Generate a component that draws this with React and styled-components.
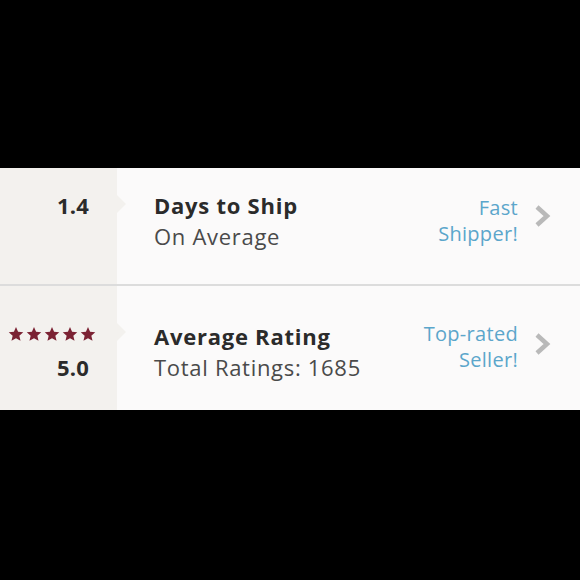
import React from "react";
import styled, { createGlobalStyle } from "styled-components";

const Global = createGlobalStyle`
  html, body { margin: 0; padding: 0; background: #000; }
  body { font-family: "Open Sans", Lato, sans-serif; }
`;

const Page = styled.div`
  width: 580px;
  height: 580px;
  background: #000;
  padding-top: 168px;
  box-sizing: border-box;
`;

const Panel = styled.div`
  background: #fbfafa;
  display: flex;
  flex-direction: column;
`;

const Row = styled.div`
  display: grid;
  grid-template-columns: 117px 1fr;
  height: ${(p) => p.$h}px;
  border-bottom: ${(p) => (p.$divider ? "2px solid #dcdcdc" : "none")};
`;

const Left = styled.div`
  position: relative;
  background: #f3f1ee;
  display: flex;
  flex-direction: column;
  align-items: flex-end;
  padding: ${(p) => p.$pt}px 28px 0 0;
  &::after {
    content: "";
    position: absolute;
    right: -9px;
    top: ${(p) => p.$notch}px;
    border-top: 9px solid transparent;
    border-bottom: 9px solid transparent;
    border-left: 9px solid #f3f1ee;
  }
`;

const Value = styled.div`
  font-size: 22px;
  font-weight: 700;
  color: #2b2b2b;
  line-height: 31px;
  letter-spacing: 0.2px;
`;

const Stars = styled.div`
  display: flex;
  gap: 2px;
  height: 26px;
  margin-bottom: 5px;
  align-items: center;
  margin-right: -7px;
`;

const Main = styled.div`
  display: flex;
  align-items: flex-start;
  padding: ${(p) => p.$pt}px 28px 0 37px;
`;

const Info = styled.div`
  flex: 1;
  display: flex;
  flex-direction: column;
`;

const Title = styled.div`
  font-size: 22px;
  font-weight: 700;
  color: #2b2b2b;
  line-height: 31px;
  letter-spacing: 0.75px;
`;

const Sub = styled.div`
  font-size: 22px;
  font-weight: 400;
  color: #4a4a4a;
  line-height: 31px;
  letter-spacing: 0.7px;
`;

const Tag = styled.div`
  font-size: 20px;
  color: #5ba6cb;
  text-align: right;
  line-height: 26px;
  letter-spacing: 0.3px;
  margin-top: ${(p) => p.$mt}px;
`;

const Chevron = styled.svg`
  width: 18px;
  height: 22px;
  margin-left: 16px;
  margin-top: ${(p) => p.$mt}px;
`;

const Star = () => (
  <svg width="16" height="16" viewBox="0 0 24 24">
    <path
      d="M12 1.5l3.1 7.2 7.8.7-5.9 5.2 1.8 7.7L12 18.3l-6.8 4 1.8-7.7-5.9-5.2 7.8-.7z"
      fill="#7b2233"
    />
  </svg>
);

const Chev = ({ mt }) => (
  <Chevron $mt={mt} viewBox="0 0 18 22">
    <path d="M3 2l10 9-10 9" fill="none" stroke="#b9b9b9" strokeWidth="4.5" />
  </Chevron>
);

export default function App() {
  return (
    <>
      <Global />
      <Page>
        <Panel>
          <Row $h={116} $divider>
            <Left $pt={22} $notch={27}>
              <Value>1.4</Value>
            </Left>
            <Main $pt={22}>
              <Info>
                <Title>Days to Ship</Title>
                <Sub>On Average</Sub>
              </Info>
              <Tag $mt={5}>
                Fast
                <br />
                Shipper!
              </Tag>
              <Chev mt={15} />
            </Main>
          </Row>
          <Row $h={124}>
            <Left $pt={35} $notch={37}>
              <Stars>
                <Star />
                <Star />
                <Star />
                <Star />
                <Star />
              </Stars>
              <Value>5.0</Value>
            </Left>
            <Main $pt={35}>
              <Info>
                <Title>Average Rating</Title>
                <Sub>Total Ratings: 1685</Sub>
              </Info>
              <Tag $mt={0}>
                Top-rated
                <br />
                Seller!
              </Tag>
              <Chev mt={12} />
            </Main>
          </Row>
        </Panel>
      </Page>
    </>
  );
}
